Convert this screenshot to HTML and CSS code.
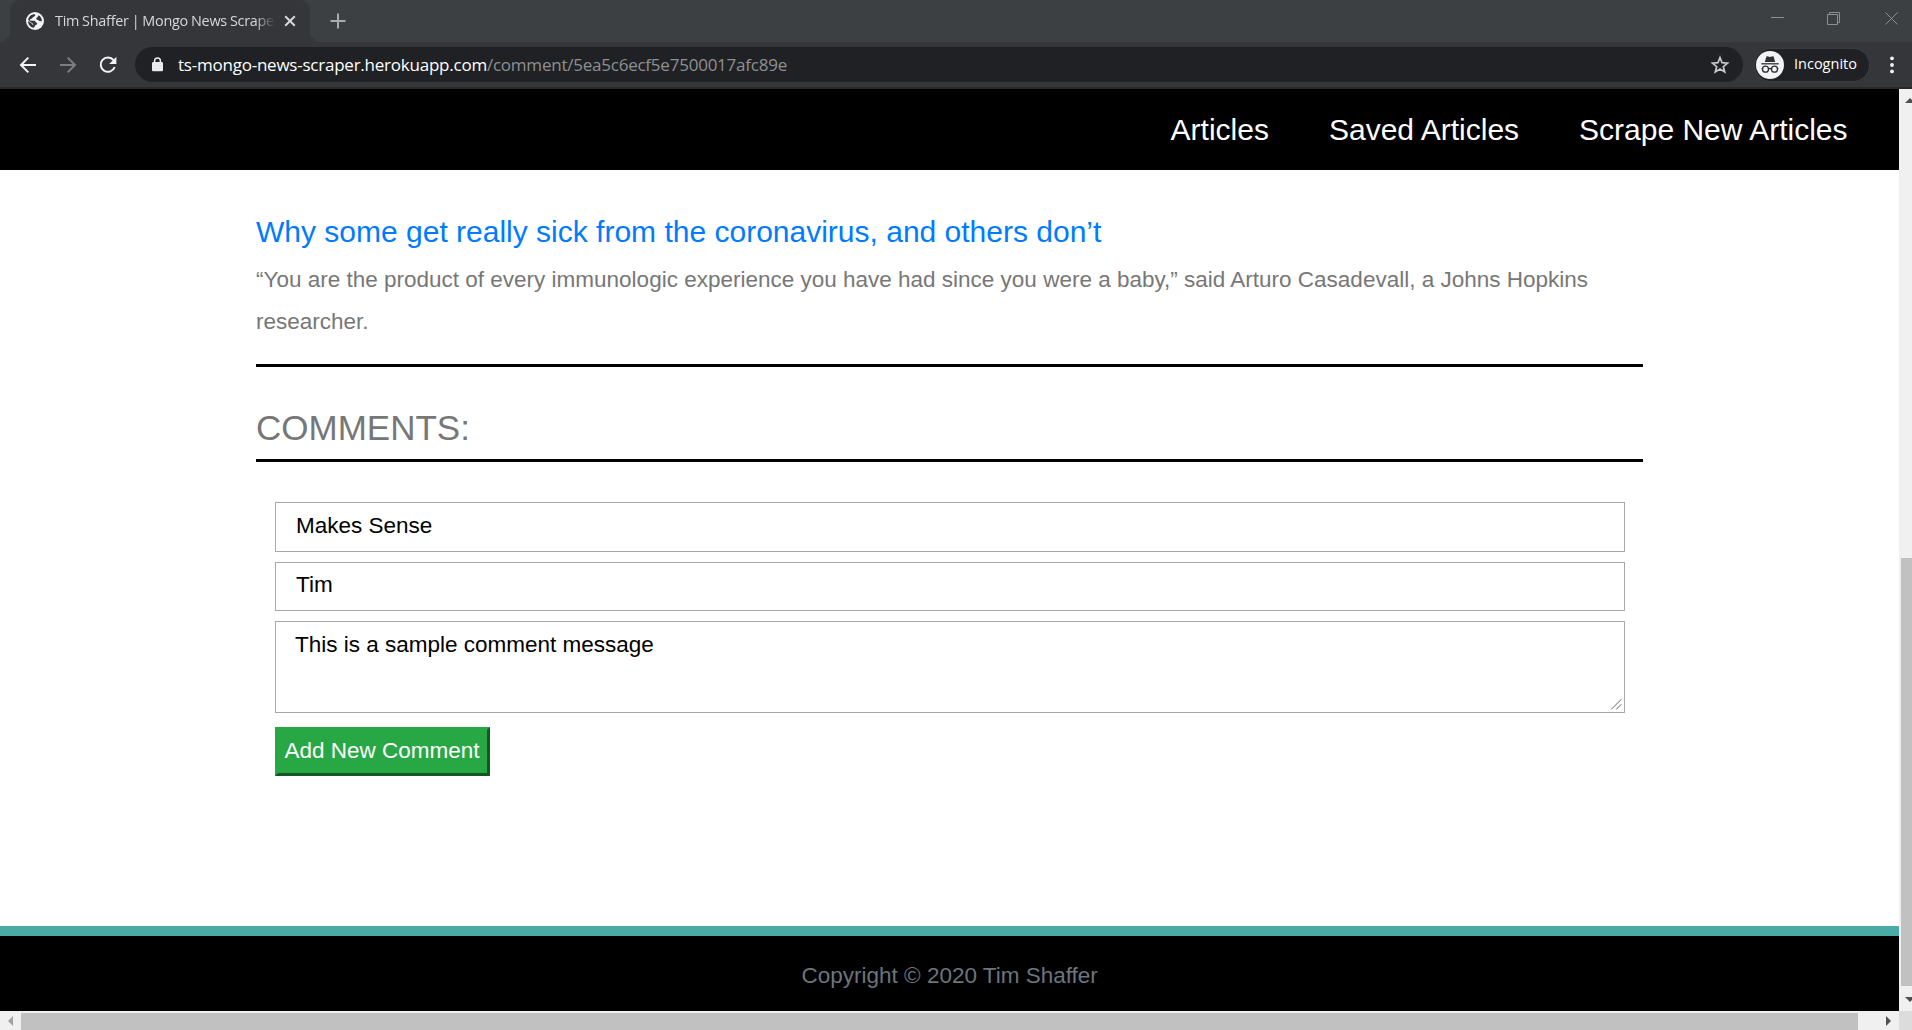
FILE: index.html
```html
<!DOCTYPE html>
<html lang="en">
<head>
<meta charset="utf-8">
<title>Tim Shaffer | Mongo News Scraper</title>
<link rel="stylesheet" href="styles.css">
</head>
<body>
<header class="browser">
  <div class="tabstrip">
    <div class="tab">
      <svg class="globe" width="18" height="18" viewBox="0 0 18 18"><circle cx="9" cy="9" r="9" fill="#f1f3f4"/><path d="M8.5 2.3 C10 3.2 9.2 4.4 7.7 4.8 C6.3 5.2 6.6 6.8 5 7 C3.6 7.2 3.6 8.6 5 8.7 L8.2 8.8 C9.6 9 9.2 10.6 10.6 10.7 C11.8 10.9 11.3 12.6 9.8 13 C8.7 13.4 8.9 15 7.8 15.7 C4 15.2 2 12.2 2.1 9 L5.2 11.2 C6.4 11.6 6.5 13 7.2 13.4 C7.8 12 6.3 10.5 4.5 10.2 L2.2 7.8 C2.8 4.5 5.4 2.3 8.5 2.3 Z M12.5 3.3 C14.8 4.5 16 6.8 15.9 9.2 L13.2 9.1 C12.6 7.8 10.6 8.2 10.2 6.8 C10 5.6 12.3 5.3 12.5 3.3 Z" fill="#35363a"/></svg>
      <span class="tab-title">Tim Shaffer | Mongo News Scraper</span>
      <svg class="tab-close" width="12" height="12" viewBox="0 0 12 12"><path d="M1.2 1.2 10.8 10.8M10.8 1.2 1.2 10.8" stroke="#d5d7da" stroke-width="2"/></svg>
    </div>
    <svg class="new-tab" width="16" height="16" viewBox="0 0 16 16"><path d="M8 .5V15.5M.5 8H15.5" stroke="#a9abad" stroke-width="2"/></svg>
    <div class="window-buttons">
      <svg width="14" height="14" viewBox="0 0 14 14"><path d="M0 5.5H13" stroke="#8d9092"/></svg>
      <svg width="14" height="14" viewBox="0 0 14 14"><path d="M.5 2.5H10.5V12.5H.5ZM2.5 2.5V.5H12.5V10.5H10.5" fill="none" stroke="#8d9092"/></svg>
      <svg width="14" height="14" viewBox="0 0 14 14"><path d="M.5 .5 12.5 12.5M12.5 .5 .5 12.5" stroke="#8d9092"/></svg>
    </div>
  </div>
  <div class="toolbar">
    <svg class="nav-icon" width="18" height="18" viewBox="0 0 18 18"><path d="M17 9H2.2M9.3 1.6 2 9 9.3 16.4" fill="none" stroke="#f1f3f4" stroke-width="2"/></svg>
    <svg class="nav-icon" width="18" height="18" viewBox="0 0 18 18"><path d="M1 9H15.8M8.7 1.6 16 9 8.7 16.4" fill="none" stroke="#7d7e82" stroke-width="2"/></svg>
    <svg class="nav-icon" width="18" height="18" viewBox="0 0 18 18"><path d="M14.6 4.2A7.2 7.2 0 1 0 15.7 11" fill="none" stroke="#f1f3f4" stroke-width="2"/><path d="M17.4 .8V8H10.2Z" fill="#f1f3f4"/></svg>
    <div class="omnibox">
      <svg class="lock" width="11" height="15" viewBox="0 0 11 15"><path d="M2.6 6V3.8A2.9 2.9 0 0 1 8.4 3.8V6" fill="none" stroke="#e8eaed" stroke-width="1.5"/><rect x="0" y="5" width="11" height="9.3" rx="1.2" fill="#e8eaed"/></svg>
      <span class="url"><span class="host">ts-mongo-news-scraper.herokuapp.com</span><span class="path">/comment/5ea5c6ecf5e7500017afc89e</span></span>
      <svg class="star" width="20" height="20" viewBox="0 0 20 20"><path d="M10 2.6 12.1 7.7 17.5 8.1 13.3 11.7 14.7 17 10 14.1 5.3 17 6.7 11.7 2.5 8.1 7.9 7.7Z" fill="none" stroke="#c6c8ca" stroke-width="1.7"/></svg>
    </div>
    <div class="incognito">
      <svg width="28" height="28" viewBox="0 0 28 28"><circle cx="14" cy="14" r="14" fill="#f1f3f4"/><path d="M10.4 5.5Q10.6 5 11.2 5.2L14 5.9 16.8 5.2Q17.4 5 17.6 5.5L19.2 11H8.8Z" fill="#303134"/><path d="M5.3 12.8H22.7" stroke="#303134" stroke-width="1.3"/><g fill="none" stroke="#303134" stroke-width="1.3"><circle cx="9.5" cy="18.2" r="3"/><circle cx="18.5" cy="18.2" r="3"/><path d="M12.5 18Q14 17 15.5 18M5.6 17.6H6.5M21.5 17.6H22.4"/></g></svg>
      <span class="incognito-label">Incognito</span>
    </div>
    <svg class="menu" width="4" height="18" viewBox="0 0 4 18"><g fill="#f1f3f4"><circle cx="2" cy="2.3" r="1.9"/><circle cx="2" cy="9" r="1.9"/><circle cx="2" cy="15.4" r="1.9"/></g></svg>
  </div>
</header>
<div class="viewport">
  <div class="page">
    <nav class="navbar"><a>Articles</a><a>Saved Articles</a><a>Scrape New Articles</a></nav>
    <main class="content">
      <h1 class="headline">Why some get really sick from the coronavirus, and others don’t</h1>
      <p class="summary">“You are the product of every immunologic experience you have had since you were a baby,” said Arturo Casadevall, a Johns Hopkins<br>researcher.</p>
      <h2 class="comments-title">COMMENTS:</h2>
      <form class="comment-form">
        <div class="field field-title">Makes Sense</div>
        <div class="field field-name">Tim</div>
        <div class="field field-message">This is a sample comment message
          <svg class="grip" width="11" height="11" viewBox="0 0 11 11"><path d="M.3 10.3 10.3 .3M5.3 10.3 10.3 5.3" stroke="#666"/></svg>
        </div>
        <button class="submit" type="button">Add New Comment</button>
      </form>
    </main>
    <footer class="footer">Copyright © 2020 Tim Shaffer</footer>
  </div>
  <div class="vscroll">
    <svg class="up" width="7" height="5" viewBox="0 0 7 5"><path d="M0 5 5 0 10 5Z" fill="#505050"/></svg>
    <div class="vthumb"></div>
    <svg class="down" width="7" height="5" viewBox="0 0 7 5"><path d="M0 0H10L5 5Z" fill="#505050"/></svg>
  </div>
  <div class="hscroll">
    <svg width="5" height="10" viewBox="0 0 5 10"><path d="M5 0V10L0 5Z" fill="#a3a3a3"/></svg>
    <div class="hthumb"></div>
    <svg width="5" height="10" viewBox="0 0 5 10"><path d="M0 0V10L5 5Z" fill="#505050"/></svg>
  </div>
  <div class="corner"></div>
</div>
</body>
</html>
```
FILE: styles.css
```css
* { box-sizing: border-box; }
body { margin: 0; width: 1912px; height: 1030px; overflow: hidden; background: #fff; font-family: "Liberation Sans", Arial, sans-serif; }
svg { display: block; flex: none; }

.browser { height: 89px; background: #35363a; border-bottom: 2px solid #28292c; font-family: "Open Sans", "Noto Sans", sans-serif; }
.tabstrip { display: flex; align-items: center; height: 42px; padding-left: 10px; background: #3c4043; }
.tab { position: relative; display: flex; align-items: center; width: 300px; height: 42px; padding-left: 16px; border-radius: 10px 10px 0 0; background: #35363a; }
.tab::before, .tab::after { content: ""; position: absolute; bottom: 0; width: 10px; height: 10px; }
.tab::before { left: -10px; background: radial-gradient(circle at 0 0, transparent 9.5px, #35363a 10px); }
.tab::after { right: -10px; background: radial-gradient(circle at 100% 0, transparent 9.5px, #35363a 10px); }
.tab-title { width: 220px; margin: 0 0 2px 11px; overflow: hidden; white-space: nowrap; font-size: 14.4px; letter-spacing: -0.25px; word-spacing: -0.5px; color: #d5d7da; -webkit-mask-image: linear-gradient(90deg, #000 200px, transparent 220px); mask-image: linear-gradient(90deg, #000 200px, transparent 220px); }
.tab-close { margin-left: 9px; }
.new-tab { margin-left: 20px; }
.window-buttons { display: flex; gap: 43px; margin: -5px 13px 0 auto; }
.window-buttons svg:nth-child(2) { margin: 0 1px 0 -1px; }

.toolbar { display: flex; align-items: center; height: 45px; padding-left: 19px; }
.nav-icon { margin-right: 22px; }
.omnibox { display: flex; align-items: center; width: 1608px; height: 35px; margin-left: -4px; padding: 0 13px 0 17px; border-radius: 18px; background: #202124; }
.lock { margin-right: 15px; }
.url { margin-right: auto; white-space: nowrap; font-size: 17px; letter-spacing: -0.23px; }
.host { color: #fff; }
.path { color: #8e9093; }
.incognito { display: flex; align-items: center; gap: 10px; width: 116px; height: 34px; margin-left: 11px; padding-left: 1px; border: 1px solid #3c3d41; border-radius: 17px; background: #202124; color: #fff; font-size: 14.5px; }
.incognito-label { margin-bottom: 2px; }
.menu { margin-left: 20px; }

.viewport { display: grid; grid-template: 922px 19px / 1899px 13px; height: 941px; }
.page { display: flex; flex-direction: column; }
.navbar { display: flex; justify-content: flex-end; align-items: center; gap: 60px; height: 81px; padding-right: 51.5px; background: #000; color: #fff; font-size: 30px; }
.content { flex: 1; padding: 42px 256px 0; color: #777; }
.headline { margin: 0; font-size: 30px; font-weight: 400; line-height: 40px; color: #007bff; white-space: nowrap; }
.summary { height: 108px; margin: 7px 0 0; border-bottom: 3px solid #000; font-size: 22.5px; line-height: 42px; white-space: nowrap; }
.comments-title { height: 95px; margin: 0; padding-top: 41px; border-bottom: 3px solid #000; font-size: 35px; font-weight: 400; line-height: 40px; }
.comment-form { display: flex; flex-direction: column; align-items: flex-start; padding: 40px 19px 0; }
.field { position: relative; width: 1350px; height: 50px; margin-bottom: 10px; padding: 8px 20px; border: 1px solid #a9a9a9; color: #000; font-size: 22.5px; line-height: 30px; }
.field-name { height: 49px; padding-top: 7px; }
.field-message { height: 92px; padding-left: 19px; margin-bottom: 14px; }
.grip { position: absolute; right: 2px; bottom: 2px; }
.submit { width: 215px; height: 49px; padding: 0 1px 2px 0; border: solid; border-width: 3px; border-color: #28a745 #155724 #155724 #28a745; background: #28a745; color: #fff; font: 22.5px/40px "Liberation Sans", Arial, sans-serif; }
.footer { height: 85px; padding-left: 801.5px; border-top: 10px solid #4aaaa5; background: #000; color: #6c757d; font-size: 22.5px; line-height: 79px; }

.vscroll { display: flex; flex-direction: column; background: #f0f0f0; overflow: hidden; }
.up { margin: 9px 0 0 6px; }
.vthumb { width: 11px; height: 428px; margin: 455px 0 11px 2px; background: #c1c1c1; }
.down { margin-left: 6px; }
.hscroll { display: flex; align-items: center; padding-left: 8px; background: #f0f0f0; }
.hthumb { width: 1837px; height: 17px; margin: 2px 28px 0 8px; background: #c1c1c1; }
.corner { background: #dcdcdc; }
```
